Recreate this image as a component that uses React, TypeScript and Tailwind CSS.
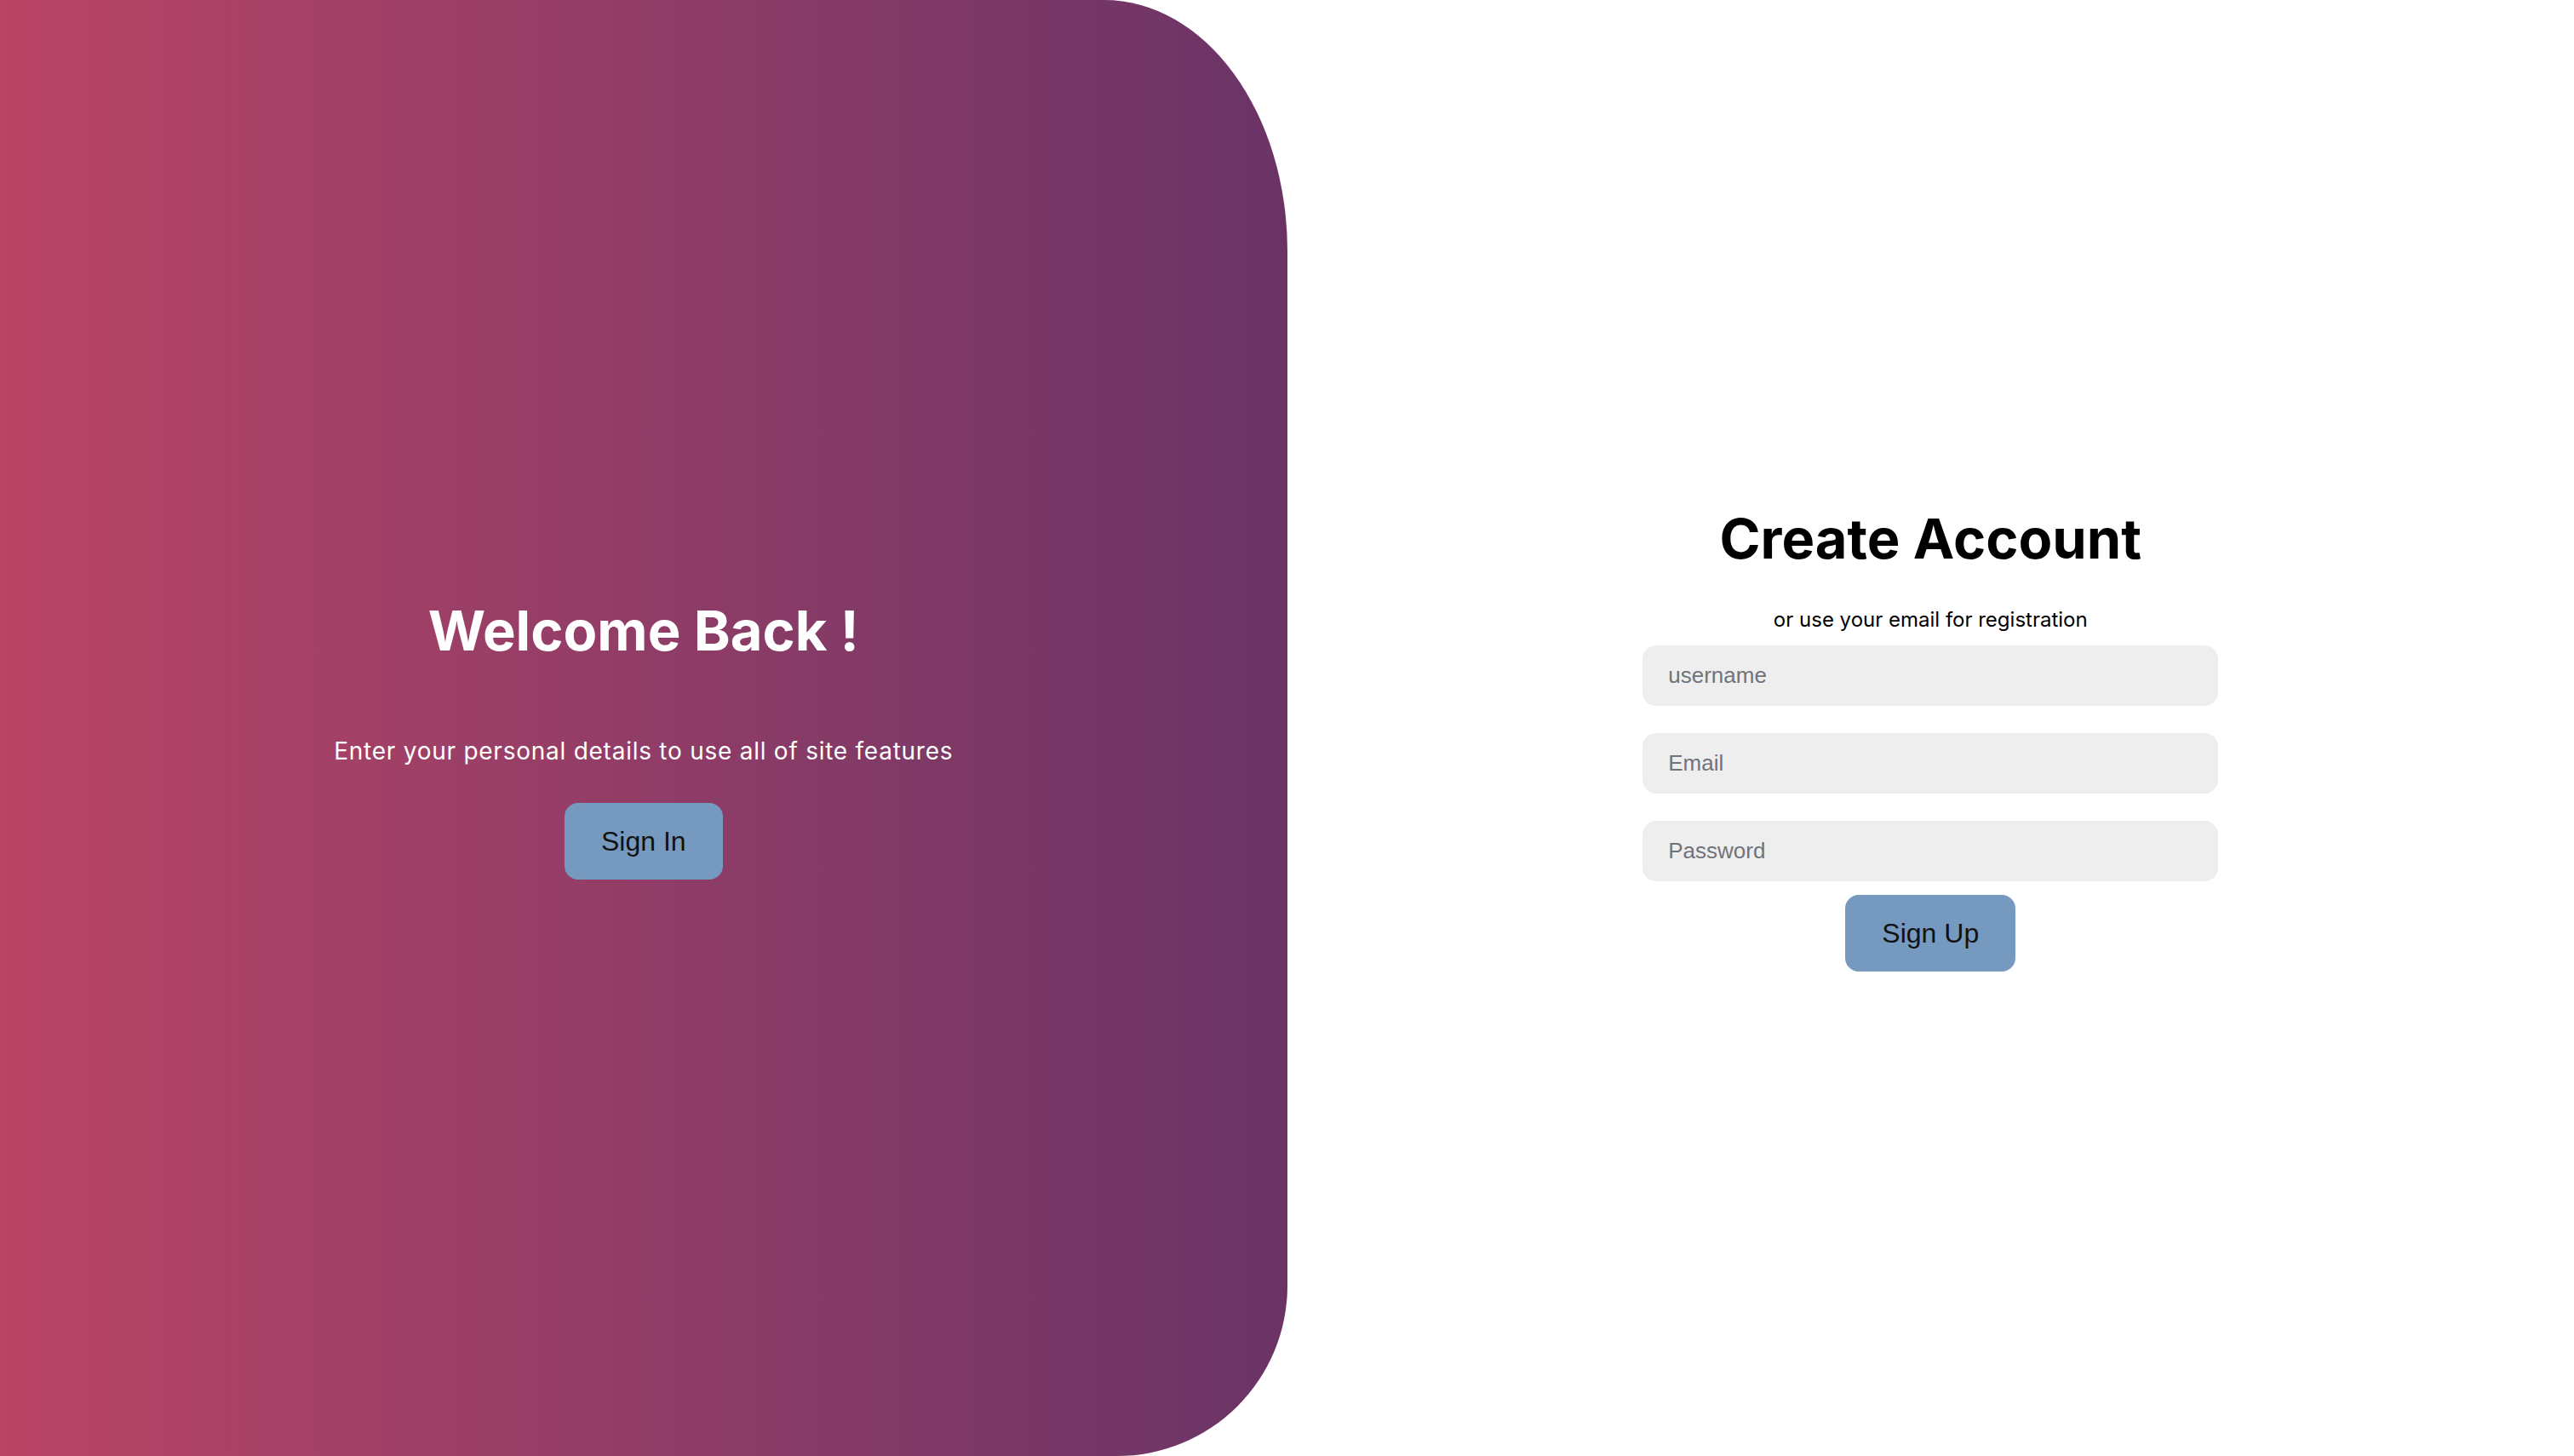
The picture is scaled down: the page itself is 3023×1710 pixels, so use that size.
export default function App() {
  return (
    <div className="flex h-[1710px] w-full overflow-hidden bg-white font-['Inter',sans-serif]">
      <div className="flex w-1/2 flex-col items-center justify-center rounded-tr-[215px_295px] rounded-br-[200px] bg-gradient-to-r from-[#b94465] to-[#6a3366] pt-[31px] text-white">
        <h1 className="text-[65px] font-bold leading-none">Welcome Back !</h1>
        <p className="mt-[89px] text-[28px] leading-[40px] tracking-[0.75px]">
          Enter your personal details to use all of site features
        </p>
        <button className="mt-[41px] flex h-[90px] items-center rounded-[16px] bg-[#7699bf] px-[43px] font-['Liberation_Sans',Arial,sans-serif] text-[32px] text-[#111]">
          Sign In
        </button>
      </div>

      <div className="flex w-1/2 flex-col items-center justify-center pt-[31px] text-black">
        <h1 className="text-[65px] font-bold leading-none">Create Account</h1>
        <span className="mt-[45px] text-[24px] leading-[36px]">or use your email for registration</span>
        <form className="mt-[12px] flex flex-col items-center gap-[32px]">
          <input
            type="text"
            placeholder="username"
            className="h-[71px] w-[676px] rounded-[16px] bg-[#eeeeee] px-[30px] font-['Liberation_Sans',Arial,sans-serif] text-[26px] outline-none placeholder:text-[#6f737a]"
          />
          <input
            type="email"
            placeholder="Email"
            className="h-[71px] w-[676px] rounded-[16px] bg-[#eeeeee] px-[30px] font-['Liberation_Sans',Arial,sans-serif] text-[26px] outline-none placeholder:text-[#6f737a]"
          />
          <input
            type="password"
            placeholder="Password"
            className="h-[71px] w-[676px] rounded-[16px] bg-[#eeeeee] px-[30px] font-['Liberation_Sans',Arial,sans-serif] text-[26px] outline-none placeholder:text-[#6f737a]"
          />
        </form>
        <button className="mt-[16px] flex h-[90px] items-center rounded-[16px] bg-[#7699bf] px-[43px] font-['Liberation_Sans',Arial,sans-serif] text-[32px] text-[#111]">
          Sign Up
        </button>
      </div>
    </div>
  );
}
